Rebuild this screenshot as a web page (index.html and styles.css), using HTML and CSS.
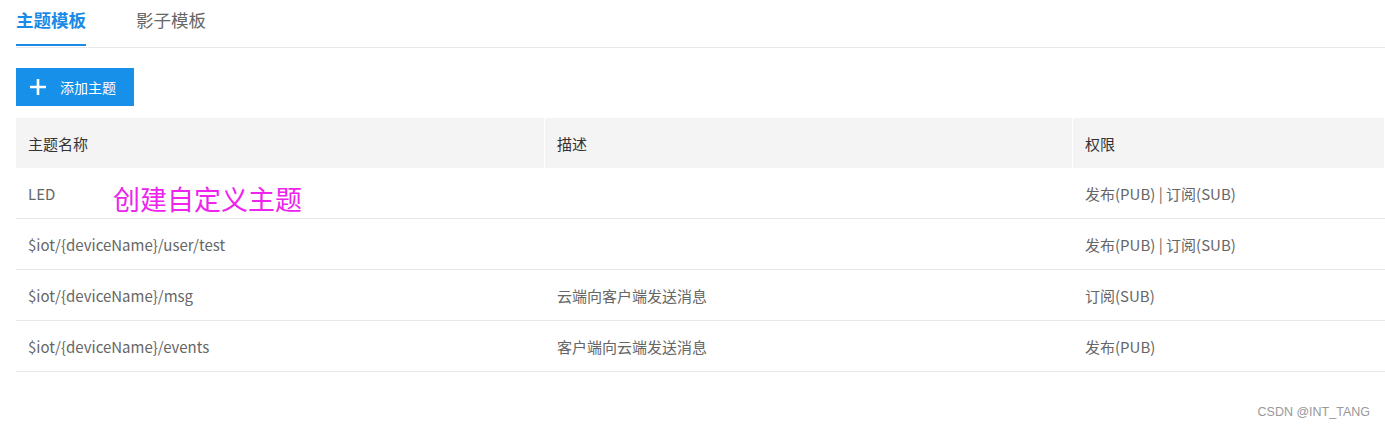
FILE: index.html
```html
<!DOCTYPE html>
<html lang="zh-CN">
<head>
  <meta charset="UTF-8">
  <title>主题模板</title>
  <link rel="stylesheet" href="styles.css">
</head>
<body>

  <div class="tabs">
    <a class="tab active" href="#">主题模板</a>
    <a class="tab" href="#">影子模板</a>
  </div>

  <div class="toolbar">
    <button class="add-btn">
      <svg width="16" height="16" viewBox="0 0 16 16"><path d="M8 0v16M0 8h16" stroke="#fff" stroke-width="2.6"/></svg>
      <span>添加主题</span>
    </button>
  </div>

  <div class="topic-table">
    <div class="row head">
      <div class="cell">主题名称</div>
      <div class="cell">描述</div>
      <div class="cell">权限</div>
    </div>
    <div class="row">
      <div class="cell">LED</div>
      <div class="cell"></div>
      <div class="cell">发布(PUB) | 订阅(SUB)</div>
      <span class="note">创建自定义主题</span>
    </div>
    <div class="row">
      <div class="cell">$iot/{deviceName}/user/test</div>
      <div class="cell"></div>
      <div class="cell">发布(PUB) | 订阅(SUB)</div>
    </div>
    <div class="row">
      <div class="cell">$iot/{deviceName}/msg</div>
      <div class="cell">云端向客户端发送消息</div>
      <div class="cell">订阅(SUB)</div>
    </div>
    <div class="row">
      <div class="cell">$iot/{deviceName}/events</div>
      <div class="cell">客户端向云端发送消息</div>
      <div class="cell">发布(PUB)</div>
    </div>
  </div>

  <div class="watermark">CSDN @INT_TANG</div>

</body>
</html>
```

FILE: styles.css
```css
body {
  margin: 0;
  padding: 0 0 0 16px;
  font-family: "Noto Sans CJK SC", "Noto Sans", sans-serif;
  color: #333;
  background: #fff;
  position: relative;
  height: 427px;
  overflow: hidden;
}

/* Tabs */
.tabs {
  display: flex;
  gap: 50px;
  height: 47px;
  border-bottom: 1px solid #e8e8e8;
}

.tab {
  font-size: 17.5px;
  line-height: 40px;
  color: #666;
  text-decoration: none;
  border-bottom: 2px solid transparent;
  margin-bottom: -1px;
  height: 46px;
  box-sizing: border-box;
}

.tab.active {
  color: #1a8ae6;
  font-weight: bold;
  border-bottom-color: #1a8ae6;
}

/* Toolbar */
.toolbar {
  padding: 20px 0 12px;
}

.add-btn {
  display: flex;
  align-items: center;
  gap: 14px;
  height: 38px;
  width: 118px;
  padding: 0 0 0 14px;
  border: none;
  background: #1790e9;
  color: #fff;
  font-family: inherit;
  font-size: 14px;
  cursor: pointer;
}

/* Table */
.row {
  display: grid;
  grid-template-columns: 529px 528px 1fr;
  height: 50px;
  border-bottom: 1px solid #e8e8e8;
  align-items: center;
  position: relative;
  font-size: 15px;
  color: #666;
}

.row.head {
  background: #f4f4f4;
  border-bottom: none;
  color: #333;
  align-items: stretch;
}

.row.head .cell {
  display: flex;
  align-items: center;
  border-right: 1px solid #fff;
}

.cell {
  padding-left: 12px;
}

.note {
  position: absolute;
  left: 97px;
  top: 13px;
  font-size: 27px;
  line-height: 36px;
  color: #ee24ee;
}

.watermark {
  position: absolute;
  right: 15px;
  bottom: 8px;
  font-family: "Liberation Sans", Arial, sans-serif;
  font-size: 12.5px;
  color: #999;
}
```
